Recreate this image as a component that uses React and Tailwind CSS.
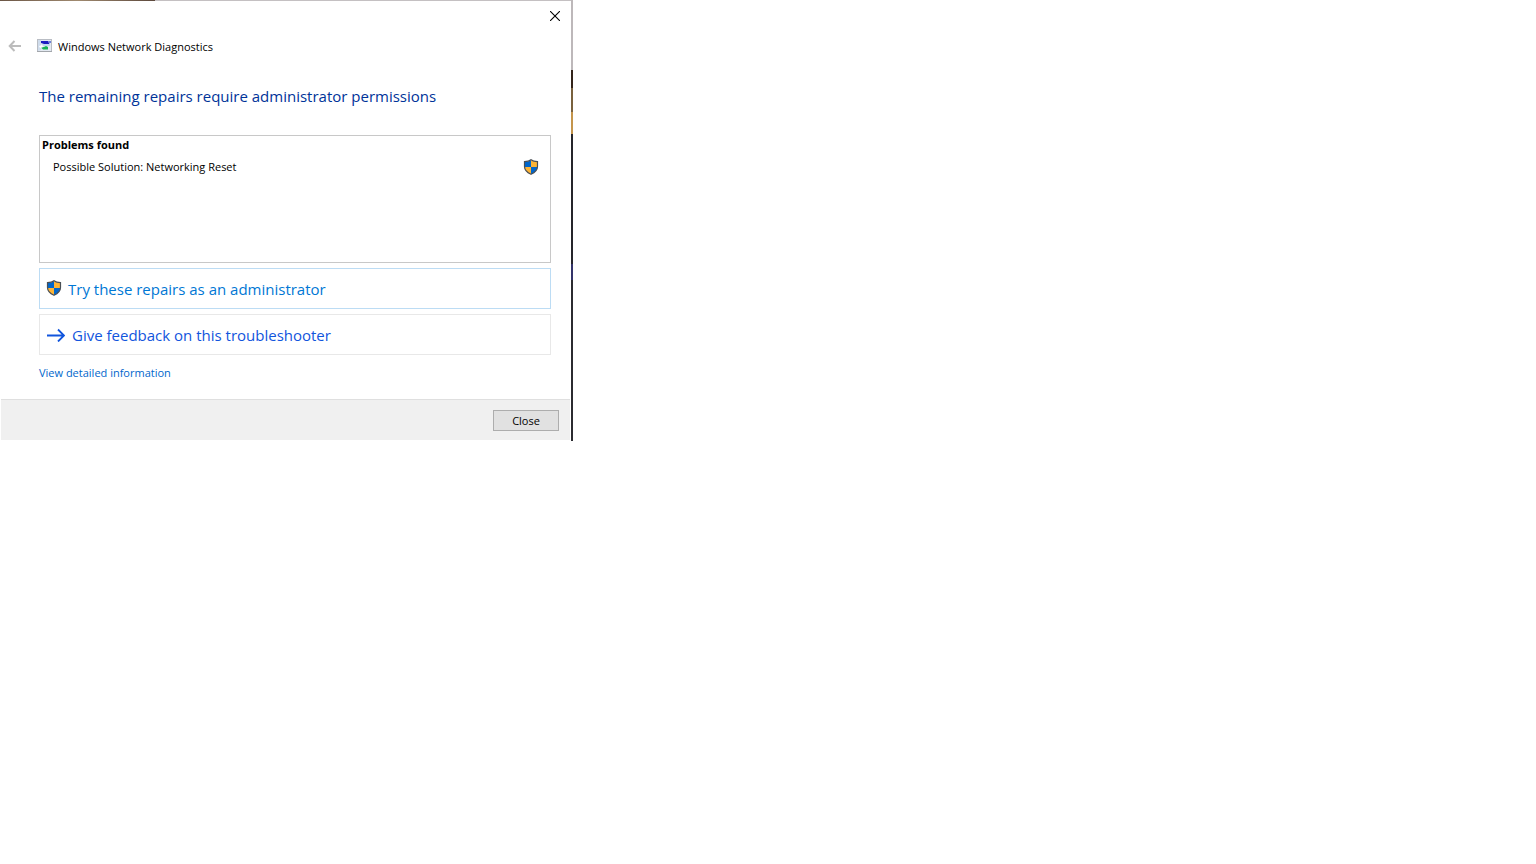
function ShieldIcon() {
  return (
    <svg width="16" height="16" viewBox="0 0 16 16" className="shrink-0" aria-hidden="true">
      <clipPath id="shield">
        <path d="M8 1 C9.500 2.300 12 3 14.500 3 V7.500 C14.500 11 12 13.500 8 15.300 C4 13.500 1.500 11 1.500 7.500 V3 C4 3 6.500 2.300 8 1 Z" />
      </clipPath>
      <g clipPath="url(#shield)">
        <rect width="8" height="8" fill="#0066cc" />
        <rect x="8" width="8" height="8" fill="#fdb436" />
        <rect y="8" width="8" height="8" fill="#fdb436" />
        <rect x="8" y="8" width="8" height="8" fill="#0066cc" />
      </g>
      <path
        d="M8 0.800 C9.500 2.100 12 2.700 14.500 2.700 V7.500 C14.500 11 12 13.500 8 15.300 C4 13.500 1.500 11 1.500 7.500 V2.700 C4 2.700 6.500 2.100 8 0.800 Z"
        fill="none"
        stroke="#4a4f55"
        strokeWidth="1.200"
      />
    </svg>
  );
}

function DiagnosticsIcon() {
  return (
    <svg width="16" height="14" viewBox="0 0 16 14" className="shrink-0" aria-hidden="true">
      <rect x="0.5" y="0.5" width="14" height="12" fill="#e4eaf2" stroke="#b9bdc4" />
      <path d="M0 12.500 H15" stroke="#a2a6ab" />
      <path d="M1 1 H4 V11 L1 12 Z" fill="#cfdcec" />
      <path d="M4 2 H11 L12.500 5 H9 L7 5 L4 4 Z" fill="#1c1cc0" />
      <path d="M11 2 H14 V4 H12 Z" fill="#6f82d8" />
      <path d="M5 5 H13 V7 H6 Z" fill="#c2d9f0" />
      <path d="M4 8.500 L7 8 L9 7 L11 8 V10.500 H6 Z" fill="#16b356" />
      <path d="M2 7 L5 6 L6 8 L3 9 Z" fill="#ffffff" />
    </svg>
  );
}

function BackArrow() {
  return (
    <svg width="14" height="12" viewBox="0 0 14 12" fill="none" stroke="#bcbcbc" strokeWidth="2" aria-hidden="true">
      <path d="M6.500 1 L1.700 6 L6.500 11 M2 6 H13" />
    </svg>
  );
}

function ForwardArrow() {
  return (
    <svg width="18" height="14" viewBox="0 0 18 14" className="shrink-0" fill="none" stroke="#1155dd" strokeWidth="1.800" aria-hidden="true">
      <path d="M0 7.500 H17 M11 1.500 L17 7.500 L11 13.500" />
    </svg>
  );
}

export default function App() {
  return (
    <div className="min-h-screen bg-white font-['Open_Sans','Noto_Sans',sans-serif] text-[11px] text-black">
      <div className="flex w-full max-w-[573px]">
        <main className="flex min-w-0 flex-1 flex-col pb-px">
          {/* Sliver of desktop along the top edge */}
          <div className="flex h-px">
            <div className="w-[155px] bg-linear-to-r from-[#6b5646] via-[#a08a70] to-[#5c483c]" />
            <div className="flex-1 bg-[#c4c0c2]" />
          </div>

          {/* Title bar */}
          <div className="flex h-[30px] justify-end">
            <button type="button" aria-label="Close window" className="flex w-8 items-center justify-center">
              <svg width="10" height="10" viewBox="0 0 10 10" stroke="#000" strokeWidth="1.100" aria-hidden="true">
                <path d="M0 0 L10 10 M10 0 L0 10" />
              </svg>
            </button>
          </div>
          <header className="flex h-[30px] items-center pl-2">
            <button type="button" aria-label="Back" disabled className="mr-[15px]">
              <BackArrow />
            </button>
            <DiagnosticsIcon />
            <span className="ml-[5px] pt-0.5">Windows Network Diagnostics</span>
          </header>

          <div className="pr-5 pl-[39px]">
            <h1 className="mt-[23px] text-[15px] leading-6 text-[#003399]">
              The remaining repairs require administrator permissions
            </h1>

            <section className="mt-[27px] min-h-32 border border-[#c8c8c8] pr-[11px] pl-0.5">
              <h2 className="leading-[18px] font-bold">Problems found</h2>
              <ul>
                <li className="mt-1 flex items-center justify-between pl-[11px] leading-[18px]">
                  Possible Solution: Networking Reset
                  <ShieldIcon />
                </li>
              </ul>
            </section>

            <button
              type="button"
              className="mt-[5px] flex h-[41px] w-full items-center gap-1.5 border border-[#bcdcf4] px-1.5 text-[15px] text-[#0077d4]"
            >
              <span className="pb-0.5">
                <ShieldIcon />
              </span>
              <span className="pt-px">Try these repairs as an administrator</span>
            </button>
            <button
              type="button"
              className="mt-[5px] flex h-[41px] w-full items-center gap-[7px] border border-[#e8e8e8] px-[7px] text-[15px] text-[#1155dd]"
            >
              <ForwardArrow />
              <span className="pt-px">Give feedback on this troubleshooter</span>
            </button>

            <a href="#details" className="mt-[9px] inline-block leading-[18px] text-[#0066cc]">
              View detailed information
            </a>
          </div>

          {/* Footer */}
          <footer className="mx-px mt-[17px] flex h-[41px] items-center justify-end border-t border-[#dfdfdf] bg-[#f0f0f0] pr-[11px]">
            <button type="button" className="h-[21px] w-[66px] border border-[#adadad] bg-[#e1e1e1] leading-5">
              Close
            </button>
          </footer>
        </main>

        {/* Sliver of desktop along the right edge */}
        <div className="flex w-0.5 flex-col">
          <div className="h-[70px] bg-[#bdb8ba]" />
          <div className="h-[18px] bg-[#33241a]" />
          <div className="h-6 bg-[#79613e]" />
          <div className="h-[22px] bg-[#c4954c]" />
          <div className="h-[130px] bg-[#25252b]" />
          <div className="h-4 bg-[#34346a]" />
          <div className="flex-1 bg-[#2b2b30]" />
        </div>
      </div>
    </div>
  );
}
